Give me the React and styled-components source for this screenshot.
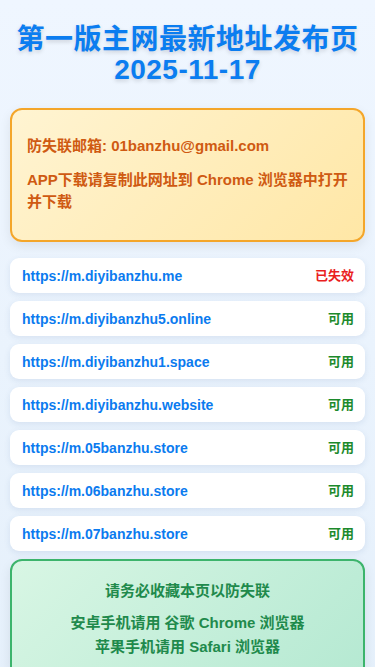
import React from 'react'
import styled, { createGlobalStyle } from 'styled-components'

const GlobalStyle = createGlobalStyle`
    html, body {
        margin: 0;
        padding: 0;
    }
    body {
        min-height: 100vh;
        background: linear-gradient(180deg, #eff6ff 0%, #e5f0fb 100%);
        font-family: "Liberation Sans", Arial, "Noto Sans CJK SC", sans-serif;
    }
`;

const links = [
    { url: 'https://m.diyibanzhu.me', status: '已失效', ok: false },
    { url: 'https://m.diyibanzhu5.online', status: '可用', ok: true },
    { url: 'https://m.diyibanzhu1.space', status: '可用', ok: true },
    { url: 'https://m.diyibanzhu.website', status: '可用', ok: true },
    { url: 'https://m.05banzhu.store', status: '可用', ok: true },
    { url: 'https://m.06banzhu.store', status: '可用', ok: true },
    { url: 'https://m.07banzhu.store', status: '可用', ok: true },
];

function App() {
    return (
        <>
            <GlobalStyle />
            <Page>
                <Title>
                    第一版主网最新地址发布页
                    <br />
                    2025-11-17
                </Title>

                <Notice>
                    <p>防失联邮箱: 01banzhu@gmail.com</p>
                    <p>APP下载请复制此网址到 Chrome 浏览器中打开并下载</p>
                </Notice>

                <LinkList>
                    {links.map((item) => (
                        <LinkRow key={item.url} href={item.url}>
                            <span>{item.url}</span>
                            <Status $ok={item.ok}>{item.status}</Status>
                        </LinkRow>
                    ))}
                </LinkList>

                <Tip>
                    <p>请务必收藏本页以防失联</p>
                    <p>
                        安卓手机请用 谷歌 Chrome 浏览器
                        <br />
                        苹果手机请用 Safari 浏览器
                    </p>
                </Tip>
            </Page>
        </>
    )
}

const Page = styled.main`
    padding: 0 10px 24px;
`;

const Title = styled.h1`
    margin: 0;
    padding: 25px 0 23px;
    text-align: center;
    font-size: 28px;
    line-height: 30px;
    letter-spacing: 0.5px;
    font-weight: 700;
    color: #0b7df0;
    text-shadow: 0 2px 4px rgba(0, 0, 0, 0.15);
`;

const Notice = styled.section`
    padding: 13px 15px 15px;
    border: 2px solid #f4a62a;
    border-radius: 12px;
    background: linear-gradient(135deg, #fff4d2 0%, #ffe7a6 100%);
    box-shadow: 0 4px 12px rgba(0, 0, 0, 0.08);
    color: #cf5a12;
    font-size: 15px;
    line-height: 22px;
    font-weight: 700;

    p {
        margin: 12px 0;
    }
`;

const LinkList = styled.div`
    display: flex;
    flex-direction: column;
    gap: 8px;
    margin: 16px 0 8px;
`;

const LinkRow = styled.a`
    display: flex;
    align-items: center;
    justify-content: space-between;
    height: 35px;
    padding: 0 11px 0 12px;
    box-sizing: border-box;
    background: #ffffff;
    border-radius: 9px;
    box-shadow: 0 2px 6px rgba(40, 80, 140, 0.1);
    text-decoration: none;
    color: #0b7bef;
    font-size: 14px;
    line-height: 16px;
    font-weight: 700;
`;

const Status = styled.span`
    font-size: 13px;
    line-height: 13px;
    font-weight: 700;
    color: ${(p) => (p.$ok ? '#1c8a2c' : '#ea1f1f')};
`;

const Tip = styled.section`
    padding: 10px 15px;
    border: 2px solid #3cb46c;
    border-radius: 12px;
    background: linear-gradient(135deg, #d8f6e4 0%, #b5e9d2 100%);
    box-shadow: 0 4px 12px rgba(0, 0, 0, 0.08);
    color: #1f8a4c;
    text-align: center;
    font-size: 15px;
    line-height: 24px;
    font-weight: 700;

    p {
        margin: 8px 0;
    }
`;

export default App
